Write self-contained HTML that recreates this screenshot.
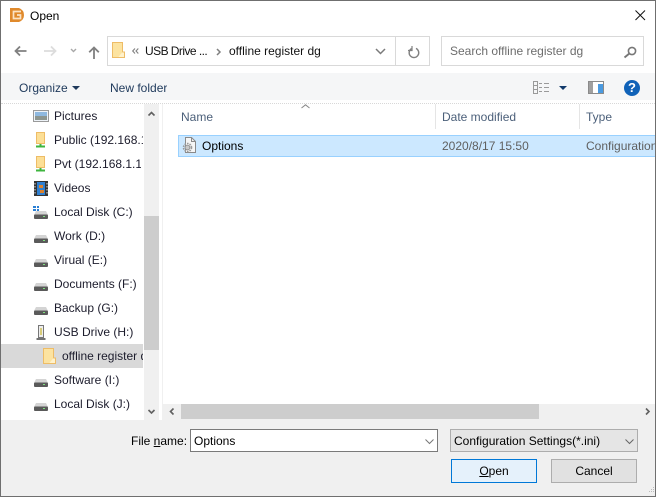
<!DOCTYPE html>
<html><head><meta charset="utf-8"><style>
html,body{margin:0;padding:0}
body{width:656px;height:497px;position:relative;overflow:hidden;background:#fff;font-family:"Liberation Sans",sans-serif;font-size:12px;color:#111}
.a{position:absolute}
.t{position:absolute;white-space:nowrap;line-height:16px;height:16px;overflow:hidden}
svg{position:absolute;overflow:visible}
.n{left:54px;color:#1c1c2c}
u{text-decoration:underline}
</style></head><body>
<!-- toolbar band -->
<div class="a" style="left:1px;top:73px;width:654px;height:27px;background:#f5f6f7"></div>
<!-- title -->
<svg style="left:9px;top:7px" width="16" height="16" viewBox="0 0 16 16"><path d="M1 1H10Q15 3 15 8Q15 13 10 15H1Z" fill="#e08a2c"/><path d="M12 4.5H4.5V11.5H11.5V8H8" fill="none" stroke="#fbe3c4" stroke-width="1.7"/></svg>
<div class="t" style="left:30px;top:8px;color:#000">Open</div>
<svg style="left:635px;top:10px" width="11" height="11"><path d="M.5.5L10 10M10 .5L.5 10" stroke="#111" stroke-width="1"/></svg>
<!-- nav arrows -->
<svg style="left:14px;top:45px" width="13" height="12"><path d="M12.5 6H1.5M6 1.5L1.5 6L6 10.5" fill="none" stroke="#808080" stroke-width="1.8"/></svg>
<svg style="left:44px;top:45px" width="13" height="12"><path d="M0 6H11M7 1.5L11.5 6L7 10.5" fill="none" stroke="#dcdcdc" stroke-width="1.8"/></svg>
<svg style="left:70px;top:48px" width="8" height="6"><path d="M1 1L3.5 3.5L6 1" fill="none" stroke="#a8a8a8" stroke-width="1.4"/></svg>
<svg style="left:88px;top:46px" width="12" height="13"><path d="M6 13V1.5M1.2 6.3L6 1.5L10.8 6.3" fill="none" stroke="#808080" stroke-width="1.8"/></svg>
<!-- address -->
<div class="a" style="left:107px;top:36px;width:321px;height:28px;border:1px solid #d9d9d9;background:#fff"></div>
<div class="a" style="left:395px;top:37px;width:1px;height:28px;background:#d9d9d9"></div>
<svg style="left:112px;top:42px" width="13" height="16"><path d="M.5.5H10.5V15.5H.5Z" fill="#fce3a0" stroke="#eebc66"/><path d="M10.5 10H12.5V15.5H6" fill="#fff2cc" stroke="#eebc66"/></svg>
<svg style="left:132px;top:48px" width="7" height="7"><path d="M3 .5L.7 3L3 5.5M6.3 .5L4 3L6.3 5.5" fill="none" stroke="#808080" stroke-width="1.1"/></svg>
<div class="t" style="left:145px;top:43px;letter-spacing:-.55px;width:66px">USB Drive ...</div>
<svg style="left:216px;top:48px" width="6" height="8"><path d="M1 1L4 4L1 7" fill="none" stroke="#808080" stroke-width="1.5"/></svg>
<div class="t" style="left:229px;top:43px">offline register dg</div>
<svg style="left:375px;top:48px" width="11" height="7"><path d="M1 1L5.5 5.5L10 1" fill="none" stroke="#7a7a7a" stroke-width="1.5"/></svg>
<svg style="left:408px;top:46px" width="12" height="12"><path d="M3.5 2.6A4.8 4.8 0 1 0 8 2.4" fill="none" stroke="#808080" stroke-width="1.4"/><path d="M4 0V4.5H0" fill="none" stroke="#808080" stroke-width="1.2"/></svg>
<!-- search -->
<div class="a" style="left:441px;top:36px;width:201px;height:28px;border:1px solid #d9d9d9;background:#fff"></div>
<div class="t" style="left:450px;top:43px;color:#6d6d6d">Search offline register dg</div>
<svg style="left:623px;top:46px" width="14" height="12"><circle cx="9" cy="5" r="3.6" fill="none" stroke="#777" stroke-width="1.6"/><path d="M6.2 7.6L1.5 11.5" stroke="#777" stroke-width="1.9"/></svg>
<!-- toolbar -->
<div class="t" style="left:19px;top:80px;color:#1e395b">Organize</div>
<svg style="left:72px;top:86px" width="9" height="5"><path d="M0 0H8L4 4Z" fill="#1e395b"/></svg>
<div class="t" style="left:110px;top:80px;color:#1e395b">New folder</div>
<svg style="left:533px;top:81px" width="17" height="13"><path d="M.5.5H4.5V12.5H.5ZM.5 4.5H4.5M.5 8.5H4.5M6 2.5H9M11 2.5H16M6 6.5H9M11 6.5H16M6 10.5H9M11 10.5H16" fill="none" stroke="#9a9a9a"/></svg>
<svg style="left:559px;top:86px" width="9" height="5"><path d="M0 0H8L4 4Z" fill="#123a6b"/></svg>
<svg style="left:588px;top:81px" width="17" height="13"><rect x=".5" y=".5" width="15" height="12" fill="#fff" stroke="#8a8a8a"/><rect x="1" y="1" width="4" height="11" fill="#a0a0a0"/><rect x="10" y="3" width="5" height="9" fill="#4a9ae0"/></svg>
<svg style="left:624px;top:80px" width="16" height="16"><circle cx="8" cy="8" r="8" fill="#0f62b8"/></svg>
<div class="t" style="left:628px;top:80px;width:8px;text-align:center;color:#fff;font-weight:bold;font-size:13px">?</div>
<!-- dotted separator -->
<div class="a" style="left:1px;top:103px;width:654px;height:0;border-top:1px dotted #d8d8d8"></div>
<!-- sidebar selection -->
<div class="a" style="left:1px;top:344px;width:142px;height:24px;background:#d9d9d9"></div>
<!-- nav items -->
<svg style="left:33px;top:110px" width="16" height="12"><rect x=".5" y=".5" width="15" height="11" fill="#eef3f8" stroke="#9a9a9a"/><rect x="2" y="2" width="12" height="4" fill="#8fb9e0"/><rect x="2" y="6" width="12" height="4" fill="#8d9690"/></svg>
<div class="t n" style="top:108px">Pictures</div>
<svg style="left:36px;top:132px" width="10" height="16"><rect x=".5" y=".5" width="8" height="11" fill="#fcdf96" stroke="#eebc66"/><path d="M4.5 12V14M0 14.5H9" stroke="#3fb53f" stroke-width="2"/></svg>
<div class="t n" style="top:132px;width:89px">Public (192.168.1.11)</div>
<svg style="left:36px;top:156px" width="10" height="16"><rect x=".5" y=".5" width="8" height="11" fill="#fcdf96" stroke="#eebc66"/><path d="M4.5 12V14M0 14.5H9" stroke="#3fb53f" stroke-width="2"/></svg>
<div class="t n" style="top:156px;width:87px">Pvt (192.168.1.11)</div>
<svg style="left:34px;top:181px" width="14" height="15"><rect width="14" height="15" fill="#333"/><rect x="3" y="1" width="8" height="13" fill="#2f7fd0"/><path d="M5 4H9V7H5ZM6 9H10V12H6Z" fill="#d9812e"/><path d="M1 2V13M13 2V13" stroke="#ddd" stroke-dasharray="1.5 1.5"/></svg>
<div class="t n" style="top:180px">Videos</div>
<svg style="left:33px;top:206px" width="7" height="6"><path d="M0 0H3V2H0ZM4 0H6V2H4ZM0 3H3V5H0ZM4 3H6V5H4Z" fill="#2a7fd4"/></svg>
<div class="t n" style="top:204px">Local Disk (C:)</div>
<div class="t n" style="top:228px">Work (D:)</div>
<div class="t n" style="top:252px">Virual (E:)</div>
<div class="t n" style="top:276px">Documents (F:)</div>
<div class="t n" style="top:300px">Backup (G:)</div>
<svg style="left:36px;top:325px" width="10" height="15"><path d="M2.5.5H7.5V12.5H2.5Z" fill="#eee" stroke="#777"/><path d="M4 3H6V10H4Z" fill="#d8cc7a"/><path d="M.5 14H9.5" stroke="#444" stroke-width="1.5"/></svg>
<div class="t n" style="top:324px">USB Drive (H:)</div>
<svg style="left:43px;top:348px" width="13" height="16"><path d="M.5.5H10.5V15.5H.5Z" fill="#fce3a0" stroke="#eebc66"/><path d="M10.5 10H12.5V15.5H6" fill="#fff2cc" stroke="#eebc66"/></svg>
<div class="t" style="left:62px;top:348px;width:81px;color:#1c1c2c">offline register dg</div>
<div class="t n" style="top:372px">Software (I:)</div>
<div class="t n" style="top:396px">Local Disk (J:)</div>
<!-- drive icons -->
<svg style="left:34px;top:211px" width="14" height="8"><path d="M2 0H12L14 4H0Z" fill="#d4d4d4"/><rect y="3.5" width="14" height="4.5" rx="1" fill="#5a5a5a"/><rect x="9" y="5" width="2" height="1" fill="#7fe07f"/></svg>
<svg style="left:34px;top:235px" width="14" height="8"><path d="M2 0H12L14 4H0Z" fill="#d4d4d4"/><rect y="3.5" width="14" height="4.5" rx="1" fill="#5a5a5a"/><rect x="9" y="5" width="2" height="1" fill="#7fe07f"/></svg>
<svg style="left:34px;top:259px" width="14" height="8"><path d="M2 0H12L14 4H0Z" fill="#d4d4d4"/><rect y="3.5" width="14" height="4.5" rx="1" fill="#5a5a5a"/><rect x="9" y="5" width="2" height="1" fill="#7fe07f"/></svg>
<svg style="left:34px;top:283px" width="14" height="8"><path d="M2 0H12L14 4H0Z" fill="#d4d4d4"/><rect y="3.5" width="14" height="4.5" rx="1" fill="#5a5a5a"/><rect x="9" y="5" width="2" height="1" fill="#7fe07f"/></svg>
<svg style="left:34px;top:307px" width="14" height="8"><path d="M2 0H12L14 4H0Z" fill="#d4d4d4"/><rect y="3.5" width="14" height="4.5" rx="1" fill="#5a5a5a"/><rect x="9" y="5" width="2" height="1" fill="#7fe07f"/></svg>
<svg style="left:34px;top:379px" width="14" height="8"><path d="M2 0H12L14 4H0Z" fill="#d4d4d4"/><rect y="3.5" width="14" height="4.5" rx="1" fill="#5a5a5a"/><rect x="9" y="5" width="2" height="1" fill="#7fe07f"/></svg>
<svg style="left:34px;top:403px" width="14" height="8"><path d="M2 0H12L14 4H0Z" fill="#d4d4d4"/><rect y="3.5" width="14" height="4.5" rx="1" fill="#5a5a5a"/><rect x="9" y="5" width="2" height="1" fill="#7fe07f"/></svg>
<!-- sidebar scrollbar -->
<div class="a" style="left:144px;top:104px;width:15px;height:316px;background:#f0f0f0"></div>
<div class="a" style="left:144px;top:216px;width:15px;height:134px;background:#cdcdcd"></div>
<svg style="left:148px;top:111px" width="8" height="6"><path d="M.5 4.5L3.5 1.5L6.5 4.5" fill="none" stroke="#606060" stroke-width="1.6"/></svg>
<svg style="left:148px;top:409px" width="8" height="6"><path d="M.5 1L3.5 4L6.5 1" fill="none" stroke="#606060" stroke-width="1.6"/></svg>
<!-- pane edge -->
<div class="a" style="left:162px;top:104px;width:1px;height:316px;background:#f0f0f0"></div>
<!-- headers -->
<svg style="left:301px;top:104px" width="9" height="5"><path d="M.5 4L4.5 .8L8.5 4" fill="none" stroke="#888" stroke-width="1"/></svg>
<div class="t" style="left:181px;top:109px;color:#4c607a">Name</div>
<div class="t" style="left:442px;top:109px;color:#4c607a">Date modified</div>
<div class="t" style="left:586px;top:109px;color:#4c607a">Type</div>
<div class="a" style="left:435px;top:104px;width:1px;height:25px;background:#e5e5e5"></div>
<div class="a" style="left:579px;top:104px;width:1px;height:25px;background:#e5e5e5"></div>
<!-- row -->
<div class="a" style="left:178px;top:135px;width:478px;height:20px;background:#cce8ff;border-top:1px solid #99d1ff;border-bottom:1px solid #99d1ff;border-left:1px solid #99d1ff"></div>
<svg style="left:182px;top:137px" width="14" height="16"><path d="M3.5.5H9.5L13.5 4.5V15.5H3.5Z" fill="#f6f6f6" stroke="#8a8a8a"/><path d="M9.5.5V4.5H13.5" fill="none" stroke="#8a8a8a"/><circle cx="5.5" cy="10.5" r="4" fill="none" stroke="#9a9a9a" stroke-width="1.6" stroke-dasharray="1.6 1"/><circle cx="5.5" cy="10.5" r="2.4" fill="#c8c8c8" stroke="#8a8a8a" stroke-width=".8"/></svg>
<div class="t" style="left:202px;top:138px;color:#000">Options</div>
<div class="t" style="left:442px;top:138px;color:#5f5f5f">2020/8/17 15:50</div>
<div class="t" style="left:586px;top:138px;color:#5f5f5f;width:70px">Configuration Settings</div>
<!-- h scrollbar -->
<div class="a" style="left:163px;top:404px;width:492px;height:16px;background:#f0f0f0"></div>
<div class="a" style="left:181px;top:404px;width:358px;height:15px;background:#cdcdcd"></div>
<svg style="left:169px;top:408px" width="6" height="8"><path d="M4.5 .5L1.5 3.5L4.5 6.5" fill="none" stroke="#606060" stroke-width="1.6"/></svg>
<svg style="left:645px;top:408px" width="6" height="8"><path d="M1 .5L4 3.5L1 6.5" fill="none" stroke="#606060" stroke-width="1.6"/></svg>
<!-- bottom -->
<div class="a" style="left:1px;top:420px;width:654px;height:76px;background:#f0f0f0"></div>
<div class="t" style="left:131px;top:433px;color:#000">File <u>n</u>ame:</div>
<div class="a" style="left:190px;top:429px;width:246px;height:21px;background:#fff;border:1px solid #7a7a7a"></div>
<div class="t" style="left:194px;top:433px;color:#000">Options</div>
<svg style="left:425px;top:439px" width="9" height="6"><path d="M.5 .5L4.5 4.5L8.5 .5" fill="none" stroke="#777" stroke-width="1"/></svg>
<div class="a" style="left:450px;top:429px;width:186px;height:21px;background:#e5e5e5;border:1px solid #adadad"></div>
<div class="t" style="left:454px;top:433px;color:#000">Configuration Settings(*.ini)</div>
<svg style="left:625px;top:439px" width="9" height="6"><path d="M.5 .5L4.5 4.5L8.5 .5" fill="none" stroke="#666" stroke-width="1"/></svg>
<div class="a" style="left:451px;top:459px;width:84px;height:22px;background:#e5f1fb;border:1px solid #0078d7"></div>
<div class="t" style="left:451px;top:463px;width:86px;text-align:center;color:#000"><u>O</u>pen</div>
<div class="a" style="left:551px;top:459px;width:84px;height:22px;background:#e1e1e1;border:1px solid #adadad"></div>
<div class="t" style="left:551px;top:463px;width:86px;text-align:center;color:#000">Cancel</div>
<svg style="left:647px;top:487px" width="8" height="8"><path d="M6 0h1v1H6zM4 2h1v1H4zM6 2h1v1H6zM2 4h1v1H2zM4 4h1v1H4zM6 4h1v1H6z" fill="#bbb"/></svg>
<!-- window border -->
<div class="a" style="left:0;top:0;width:654px;height:495px;border:1px solid #6f6f6f"></div>
</body></html>
